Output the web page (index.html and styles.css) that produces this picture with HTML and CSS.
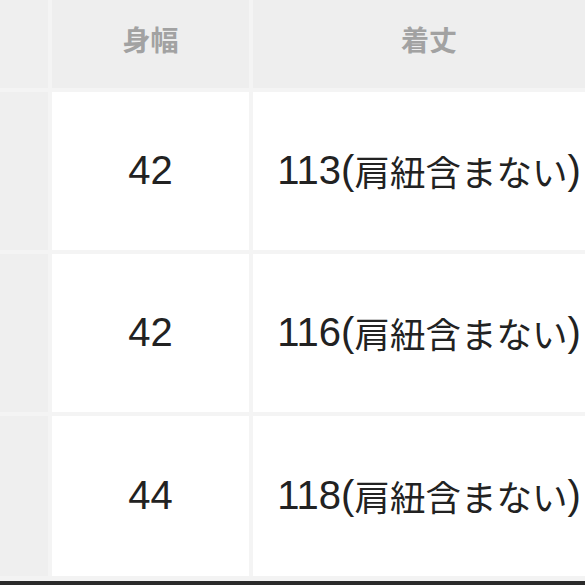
FILE: index.html
```html
<!DOCTYPE html>
<html lang="ja">
<head>
<meta charset="utf-8">
<link rel="stylesheet" href="styles.css">
</head>
<body>
<div class="page">
  <div class="size-table">
    <div class="cell side"></div>
    <div class="cell head">身幅</div>
    <div class="cell head">着丈</div>

    <div class="cell side"></div>
    <div class="cell val">42</div>
    <div class="cell val">113(<span class="jp">肩紐含まない</span>)</div>

    <div class="cell side"></div>
    <div class="cell val">42</div>
    <div class="cell val">116(<span class="jp">肩紐含まない</span>)</div>

    <div class="cell side"></div>
    <div class="cell val">44</div>
    <div class="cell val">118(<span class="jp">肩紐含まない</span>)</div>
  </div>
  <div class="bottom-bar"></div>
</div>
</body>
</html>
```
FILE: styles.css
```css
html, body {
  margin: 0;
  padding: 0;
}
body {
  width: 585px;
  height: 585px;
  overflow: hidden;
  background: #f3f3f3;
}
.page {
  display: flex;
  flex-direction: column;
  height: 585px;
}
.size-table {
  display: grid;
  grid-template-columns: 48px 197px 352px;
  grid-template-rows: 88px 158px 158px 160px;
  gap: 4px;
  background: #f4f4f4;
  width: 609px;
  font-family: "Liberation Sans", "Noto Sans CJK JP", sans-serif;
}
.cell {
  display: flex;
  align-items: center;
  justify-content: center;
  white-space: nowrap;
}
.side {
  background: #efefef;
}
.head {
  background: #eeeeee;
  color: #a2a2a2;
  font-family: "Noto Sans CJK JP", sans-serif;
  font-weight: 700;
  font-size: 28px;
  padding-bottom: 10px;
  box-sizing: border-box;
}
.val {
  background: #ffffff;
  color: #222222;
  font-size: 40px;
  padding-bottom: 2px;
  box-sizing: border-box;
}
.jp {
  font-family: "Noto Sans CJK JP", sans-serif;
  font-size: 35.5px;
}
.bottom-bar {
  margin-top: auto;
  height: 4px;
  background: #2a2a2a;
}
```
